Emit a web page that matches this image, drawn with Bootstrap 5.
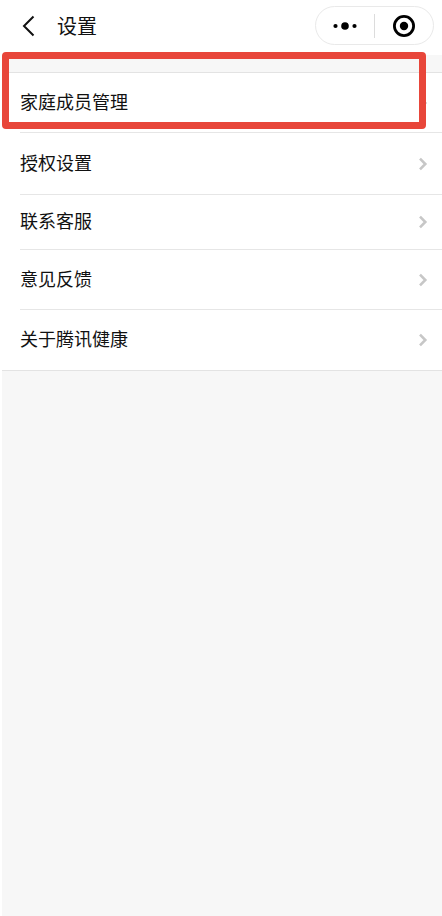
<!DOCTYPE html>
<html lang="zh-CN">
<head>
<meta charset="utf-8">
<meta name="viewport" content="width=device-width, initial-scale=1">
<title>设置</title>
<link href="https://cdn.jsdelivr.net/npm/bootstrap@5.3.0/dist/css/bootstrap.min.css" rel="stylesheet">
<style>
  body { font-family: "Liberation Sans", "Noto Sans CJK SC", sans-serif; color: #111; background: #fff; }
  .screen { margin-left: 2px; background: #f7f7f7; }
  .topbar { height: 55px; padding: 6px 8px 10px 18px; }
  .topbar h1 { font-size: 20px; line-height: 24px; font-weight: 400; padding-top: 2px; }
  .back { width: 16px; height: 24px; margin-right: 21px; margin-top: 1px; }
  .capsule { width: 119px; height: 39px; border: 1px solid #e9e9e9; border-radius: 20px; }
  .capsule button { height: 37px; }
  .capsule .divider { width: 1px; height: 24px; background: #dcdcdc; }
  .settings { margin-top: 17px; background: #fff; border-top: 1px solid #e3e3e3; border-bottom: 1px solid #e3e3e3; }
  .entry { height: 60px; margin-left: 18px; padding-right: 14px; font-size: 18px; line-height: 24px; color: #111; border-bottom: 1px solid #e6e6e6; }
  .entry-tall { height: 62px; }
  .entry-short { height: 55px; }
  .entry:last-child { border-bottom: 0; }
  .highlight { top: 52px; left: 2px; right: 16px; height: 77px; border: 7px solid #e8463a; border-radius: 4px; }
</style>
</head>
<body>
<div class="screen min-vh-100">
  <header class="topbar bg-white d-flex align-items-center">
    <button type="button" class="back btn p-0 border-0 d-flex align-items-center" aria-label="返回">
      <svg width="16" height="24" viewBox="0 0 16 24" fill="none" stroke="#111" stroke-width="2"><path d="M13.500 2.500 4 12l9.500 9.500"/></svg>
    </button>
    <h1 class="m-0 me-auto">设置</h1>
    <div class="capsule d-flex align-items-center">
      <button type="button" class="btn p-0 border-0 w-50 d-flex align-items-center justify-content-center" aria-label="更多">
        <svg width="26" height="10" viewBox="0 0 26 10"><circle cx="3.500" cy="5" r="2.100"/><circle cx="13" cy="5" r="3.800"/><circle cx="22.500" cy="5" r="2.100"/></svg>
      </button>
      <span class="divider"></span>
      <button type="button" class="btn p-0 border-0 w-50 d-flex align-items-center justify-content-center" aria-label="关闭">
        <svg width="24" height="24" viewBox="0 0 24 24"><circle cx="12" cy="12" r="9.600" fill="none" stroke="#000" stroke-width="2.800"/><circle cx="12" cy="12" r="4.200"/></svg>
      </button>
    </div>
  </header>

  <nav class="settings" aria-label="设置">
    <a href="#family" class="entry d-flex align-items-center justify-content-between text-decoration-none">家庭成员管理
      <svg width="10" height="14" viewBox="0 0 10 14" fill="none" stroke="#c7c7c7" stroke-width="2.600"><path d="M2 1.700 7.300 7 2 12.300"/></svg></a>
    <a href="#auth" class="entry entry-tall d-flex align-items-center justify-content-between text-decoration-none">授权设置
      <svg width="10" height="14" viewBox="0 0 10 14" fill="none" stroke="#c7c7c7" stroke-width="2.600"><path d="M2 1.700 7.300 7 2 12.300"/></svg></a>
    <a href="#service" class="entry entry-short d-flex align-items-center justify-content-between text-decoration-none">联系客服
      <svg width="10" height="14" viewBox="0 0 10 14" fill="none" stroke="#c7c7c7" stroke-width="2.600"><path d="M2 1.700 7.300 7 2 12.300"/></svg></a>
    <a href="#feedback" class="entry d-flex align-items-center justify-content-between text-decoration-none">意见反馈
      <svg width="10" height="14" viewBox="0 0 10 14" fill="none" stroke="#c7c7c7" stroke-width="2.600"><path d="M2 1.700 7.300 7 2 12.300"/></svg></a>
    <a href="#about" class="entry d-flex align-items-center justify-content-between text-decoration-none">关于腾讯健康
      <svg width="10" height="14" viewBox="0 0 10 14" fill="none" stroke="#c7c7c7" stroke-width="2.600"><path d="M2 1.700 7.300 7 2 12.300"/></svg></a>
  </nav>
</div>
<div class="highlight position-absolute pe-none"></div>
<script src="https://cdn.jsdelivr.net/npm/bootstrap@5.3.0/dist/js/bootstrap.bundle.min.js"></script>
</body>
</html>
